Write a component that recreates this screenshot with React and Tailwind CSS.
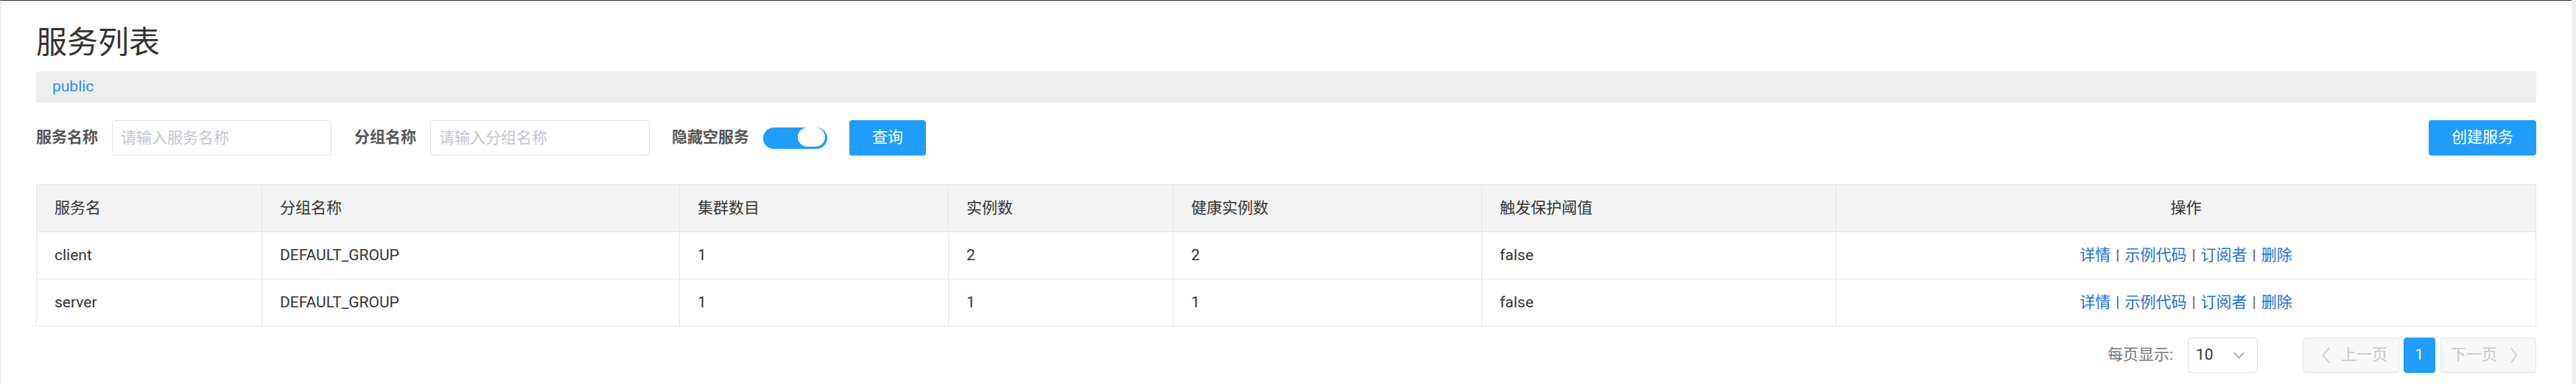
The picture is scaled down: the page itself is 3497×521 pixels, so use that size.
import React from 'react';

const columns = [
  { title: '服务名', key: 'name' },
  { title: '分组名称', key: 'groupName' },
  { title: '集群数目', key: 'clusterCount' },
  { title: '实例数', key: 'ipCount' },
  { title: '健康实例数', key: 'healthyInstanceCount' },
  { title: '触发保护阈值', key: 'triggerFlag' },
];

const services = [
  { name: 'client', groupName: 'DEFAULT_GROUP', clusterCount: 1, ipCount: 2, healthyInstanceCount: 2, triggerFlag: 'false' },
  { name: 'server', groupName: 'DEFAULT_GROUP', clusterCount: 1, ipCount: 1, healthyInstanceCount: 1, triggerFlag: 'false' },
];

const actions = ['详情', '示例代码', '订阅者', '删除'];

const gridCols = 'grid grid-cols-[306px_567px_365px_305px_419px_481px_1fr]';

function SearchInput({ placeholder }) {
  return (
    <input
      placeholder={placeholder}
      className="w-[298px] h-[48px] px-[11px] text-[21px] border border-[#dcdee3] rounded-[4px] outline-none placeholder:text-[#c4c6cf]"
    />
  );
}

function FormLabel({ children }) {
  return <span className="pr-[19px] text-[21px] font-bold text-[#555]">{children}</span>;
}

// Service table
function ServiceTable() {
  return (
    <div className="mt-[39px] border-t border-l border-r border-[#e6e6e6] text-[21px] text-[#333]">
      <div className={`${gridCols} h-[64px] bg-[#f4f4f4] border-b border-[#e6e6e6]`}>
        {columns.map((col) => (
          <div key={col.key} className="flex items-center pl-[24px] border-r border-[#e6e6e6]">
            {col.title}
          </div>
        ))}
        <div className="flex items-center justify-center">操作</div>
      </div>
      {services.map((s) => (
        <div key={s.name} className={`${gridCols} h-[64px] border-b border-[#e6e6e6]`}>
          {columns.map((col) => (
            <div key={col.key} className="flex items-center pl-[24px] border-r border-[#e6e6e6]">
              {s[col.key]}
            </div>
          ))}
          <div className="flex items-center justify-center">
            {actions.map((a, i) => (
              <React.Fragment key={a}>
                {i > 0 && <span className="mx-[7px] text-[#555]">|</span>}
                <a className="text-[#1e6fdc] cursor-pointer">{a}</a>
              </React.Fragment>
            ))}
          </div>
        </div>
      ))}
    </div>
  );
}

// Pagination
function Pager() {
  return (
    <div className="mt-[15px] flex items-center justify-end text-[21px]">
      <span className="text-[#777]">每页显示:</span>
      <div className="ml-[20px] w-[95px] h-[48px] flex items-center justify-between pl-[10px] pr-[17px] border border-[#dcdee3] rounded-[4px] text-[#333]">
        <span>10</span>
        <svg width="15" height="10" viewBox="0 0 15 10">
          <polyline points="1,1.5 7.5,8.5 14,1.5" fill="none" stroke="#999" strokeWidth="1.5" />
        </svg>
      </div>
      <div className="ml-[61px] w-[131px] h-[48px] flex items-center gap-[15px] pl-[25px] bg-[#f8f8f8] border border-[#e6e6e6] rounded-[4px] text-[#c8c8c8]">
        <svg width="11" height="22" viewBox="0 0 11 22">
          <polyline points="10,1 1.5,11 10,21" fill="none" stroke="#c8c8c8" strokeWidth="1.5" />
        </svg>
        <span>上一页</span>
      </div>
      <div className="ml-[6px] w-[43px] h-[48px] flex items-center justify-center bg-[#209dfa] rounded-[4px] text-white">
        1
      </div>
      <div className="ml-[7px] w-[130px] h-[48px] flex items-center gap-[18px] pl-[13px] bg-[#f8f8f8] border border-[#e6e6e6] rounded-[4px] text-[#c8c8c8]">
        <span>下一页</span>
        <svg width="9" height="22" viewBox="0 0 9 22">
          <polyline points="1,1 8,11 1,21" fill="none" stroke="#c8c8c8" strokeWidth="1.5" />
        </svg>
      </div>
    </div>
  );
}

export default function App() {
  return (
    <div className="flex min-h-[521px] bg-white font-[Roboto,'Noto_Sans_CJK_SC',sans-serif]">
      <div className="flex-1 border-t border-t-[#2d3236] border-l border-l-[#e4e4e4] pl-[48px] pr-[48px] pt-[36px]">
        <h1 className="text-[42px] leading-[42px] text-[#333] font-normal">服务列表</h1>

        <div className="mt-[18px] h-[42px] flex items-center pl-[22px] bg-[#eeeeee]">
          <span className="text-[21px] text-[#2196f3]">public</span>
        </div>

        <div className="mt-[24px] h-[48px] flex items-center justify-between">
          <div className="flex items-center">
            <div className="flex items-center">
              <FormLabel>服务名称</FormLabel>
              <SearchInput placeholder="请输入服务名称" />
            </div>
            <div className="ml-[31px] flex items-center">
              <FormLabel>分组名称</FormLabel>
              <SearchInput placeholder="请输入分组名称" />
            </div>
            <div className="ml-[30px] flex items-center">
              <FormLabel>隐藏空服务</FormLabel>
              <div className="w-[87px] h-[29px] flex justify-end items-start pr-[3px] bg-[#209dfa] rounded-full">
                <div className="w-[37px] h-[26px] bg-white rounded-full" />
              </div>
            </div>
            <button className="ml-[30px] w-[104px] h-[48px] bg-[#209dfa] rounded-[4px] text-white text-[21px]">查询</button>
          </div>
          <button className="w-[146px] h-[48px] bg-[#209dfa] rounded-[4px] text-white text-[21px]">创建服务</button>
        </div>

        <ServiceTable />
        <Pager />
      </div>
      <div className="w-[6px] bg-[#efefef]" />
    </div>
  );
}
